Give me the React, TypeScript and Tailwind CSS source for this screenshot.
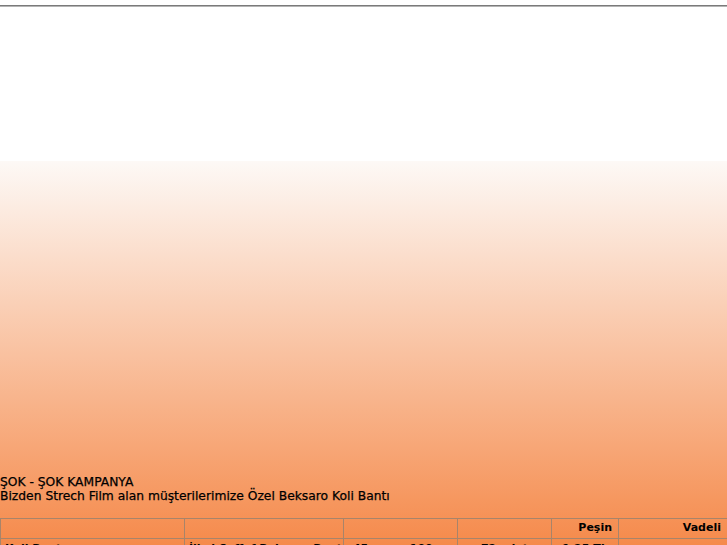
import React from "react";

const cols = [184, 159, 114, 94, 67, 109];

const rows = [
  ["Koli Bantı", "İlkel Şeffaf Beksaro Bant", "45 mm x 100 m", "72 adet", "1,25 TL", ""],
  ["Koli Bantı", "İlkel Kahve Beksaro Bant", "45 mm x 100 m", "72 adet", "1,25 TL", ""],
];

export default function App() {
  return (
    <div
      className="h-[545px] overflow-hidden bg-white text-black"
      style={{ fontFamily: '"DejaVu Sans", sans-serif' }}
    >
      <div className="pt-[5px]">
        <div className="h-[2px] border-t border-[#7a7a7a] border-b border-b-[#b4b4b4]" />
      </div>
      <div className="h-[154px]" />
      <div className="bg-linear-to-b/srgb from-[#fdf9f6] to-[#f58a4b] pt-[314px] h-[384px]">
        <div className="text-[12.3px] leading-[14px] [-webkit-text-stroke:0.25px_black]">
          <div>ŞOK - ŞOK KAMPANYA</div>
          <div>Bizden Strech Film alan müşterilerimize Özel Beksaro Koli Bantı</div>
        </div>
        <table className="mt-[15px] w-full table-fixed border-collapse border border-[#7d5a3c] text-[11px]">
          <colgroup>
            {cols.map((w, i) => (
              <col key={i} style={{ width: w }} />
            ))}
          </colgroup>
          <thead>
            <tr className="h-[20px]">
              <th className="border border-[#a8846a]" />
              <th className="border border-[#a8846a]" />
              <th className="border border-[#a8846a]" />
              <th className="border border-[#a8846a]" />
              <th className="border border-[#a8846a] px-[6px] text-right font-bold">Peşin</th>
              <th className="border border-[#a8846a] px-[6px] text-right font-bold">Vadeli</th>
            </tr>
          </thead>
          <tbody>
            {rows.map((r, i) => (
              <tr key={i} className="h-[20px]">
                {r.map((c, j) => (
                  <td
                    key={j}
                    className={`overflow-hidden whitespace-nowrap border border-[#a8846a] pt-[2px] align-top font-bold ${
                      j < 2 ? "px-[4px] text-left" : "px-[6px] text-center"
                    }`}
                  >
                    {c}
                  </td>
                ))}
              </tr>
            ))}
          </tbody>
        </table>
      </div>
    </div>
  );
}
